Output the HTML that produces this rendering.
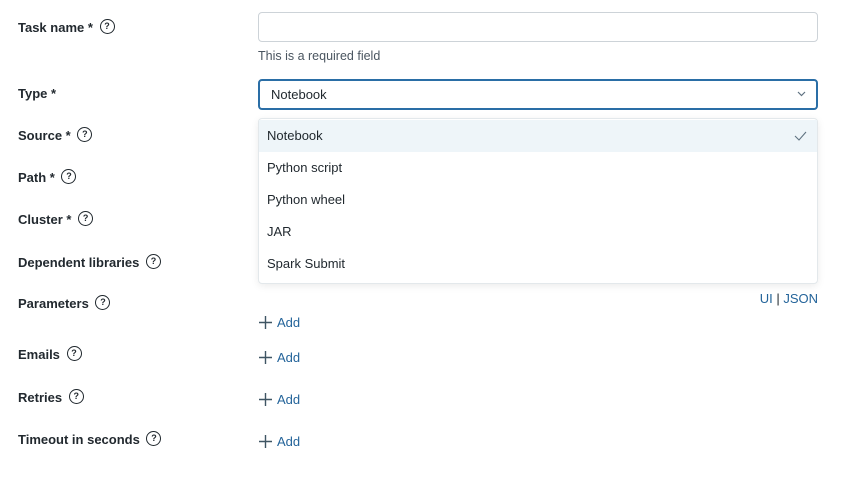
<!DOCTYPE html>
<html><head><style>
body{margin:0;width:845px;height:488px;background:#fff;font-family:"Liberation Sans",sans-serif;color:#1f272d;font-size:13px;position:relative;overflow:hidden}
.a{position:absolute;white-space:nowrap}
.lbl{left:18px;font-weight:bold;font-size:13px;line-height:16px;color:#22292f}
.q{display:inline-block;width:13px;height:13px;border:1.4px solid #1f272d;border-radius:50%;font-size:9px;line-height:13px;text-align:center;font-weight:bold;vertical-align:3px;margin-left:3px;box-sizing:content-box}
.add{left:259px;color:#24649a;font-size:13px;line-height:16px}
.add svg{vertical-align:-2px;margin-right:5px}
.opt{position:absolute;left:0;right:0;height:32px;line-height:32px;padding-left:8px}
</style></head><body>
<div class="a lbl" style="top:19px">Task name * <span class="q">?</span></div>
<div class="a lbl" style="top:86px">Type *</div>
<div class="a lbl" style="top:127px">Source * <span class="q">?</span></div>
<div class="a lbl" style="top:169px">Path * <span class="q">?</span></div>
<div class="a lbl" style="top:211px">Cluster * <span class="q">?</span></div>
<div class="a lbl" style="top:254px">Dependent libraries <span class="q">?</span></div>
<div class="a lbl" style="top:295px">Parameters <span class="q">?</span></div>
<div class="a lbl" style="top:346px">Emails <span class="q">?</span></div>
<div class="a lbl" style="top:389px">Retries <span class="q">?</span></div>
<div class="a lbl" style="top:431px">Timeout in seconds <span class="q">?</span></div>

<div class="a" style="left:258px;top:12px;width:560px;height:30px;border:1px solid #cdd3d8;border-radius:4px;box-sizing:border-box"></div>
<div class="a" style="left:258px;top:49px;color:#4a5560;font-size:12.5px">This is a required field</div>
<div class="a" style="left:258px;top:79px;width:560px;height:31px;border:2px solid #2a6ea6;border-radius:4px;box-sizing:border-box;padding-left:11px;line-height:27px">Notebook
<svg style="position:absolute;right:10px;top:10px" width="9" height="6" viewBox="0 0 9 6"><path d="M1 1l3.5 3.5L8 1" fill="none" stroke="#5f7281" stroke-width="1.2"/></svg></div>

<div class="a" style="left:258px;top:118px;width:560px;height:166px;border:1px solid #e3e8eb;border-radius:4px;box-shadow:0 2px 8px rgba(0,0,0,.08);box-sizing:border-box;background:#fff">
<div class="opt" style="top:1px;background:#eef5f9">Notebook
<svg style="position:absolute;right:10px;top:11px" width="13" height="10" viewBox="0 0 13 10"><path d="M1 5l4 4L12 1" fill="none" stroke="#5f7281" stroke-width="1.1"/></svg></div>
<div class="opt" style="top:33px">Python script</div>
<div class="opt" style="top:65px">Python wheel</div>
<div class="opt" style="top:97px">JAR</div>
<div class="opt" style="top:129px">Spark Submit</div>
</div>

<div class="a" style="right:27px;top:291px;color:#24649a">UI <span style="color:#1f272d">|</span> JSON</div>
<div class="a add" style="top:315px"><svg width="13" height="13" viewBox="0 0 13 13"><path d="M6.5 0v13M0 6.5h13" stroke="#3f5563" stroke-width="1.4"/></svg>Add</div>
<div class="a add" style="top:350px"><svg width="13" height="13" viewBox="0 0 13 13"><path d="M6.5 0v13M0 6.5h13" stroke="#3f5563" stroke-width="1.4"/></svg>Add</div>
<div class="a add" style="top:392px"><svg width="13" height="13" viewBox="0 0 13 13"><path d="M6.5 0v13M0 6.5h13" stroke="#3f5563" stroke-width="1.4"/></svg>Add</div>
<div class="a add" style="top:434px"><svg width="13" height="13" viewBox="0 0 13 13"><path d="M6.5 0v13M0 6.5h13" stroke="#3f5563" stroke-width="1.4"/></svg>Add</div>
</body></html>
